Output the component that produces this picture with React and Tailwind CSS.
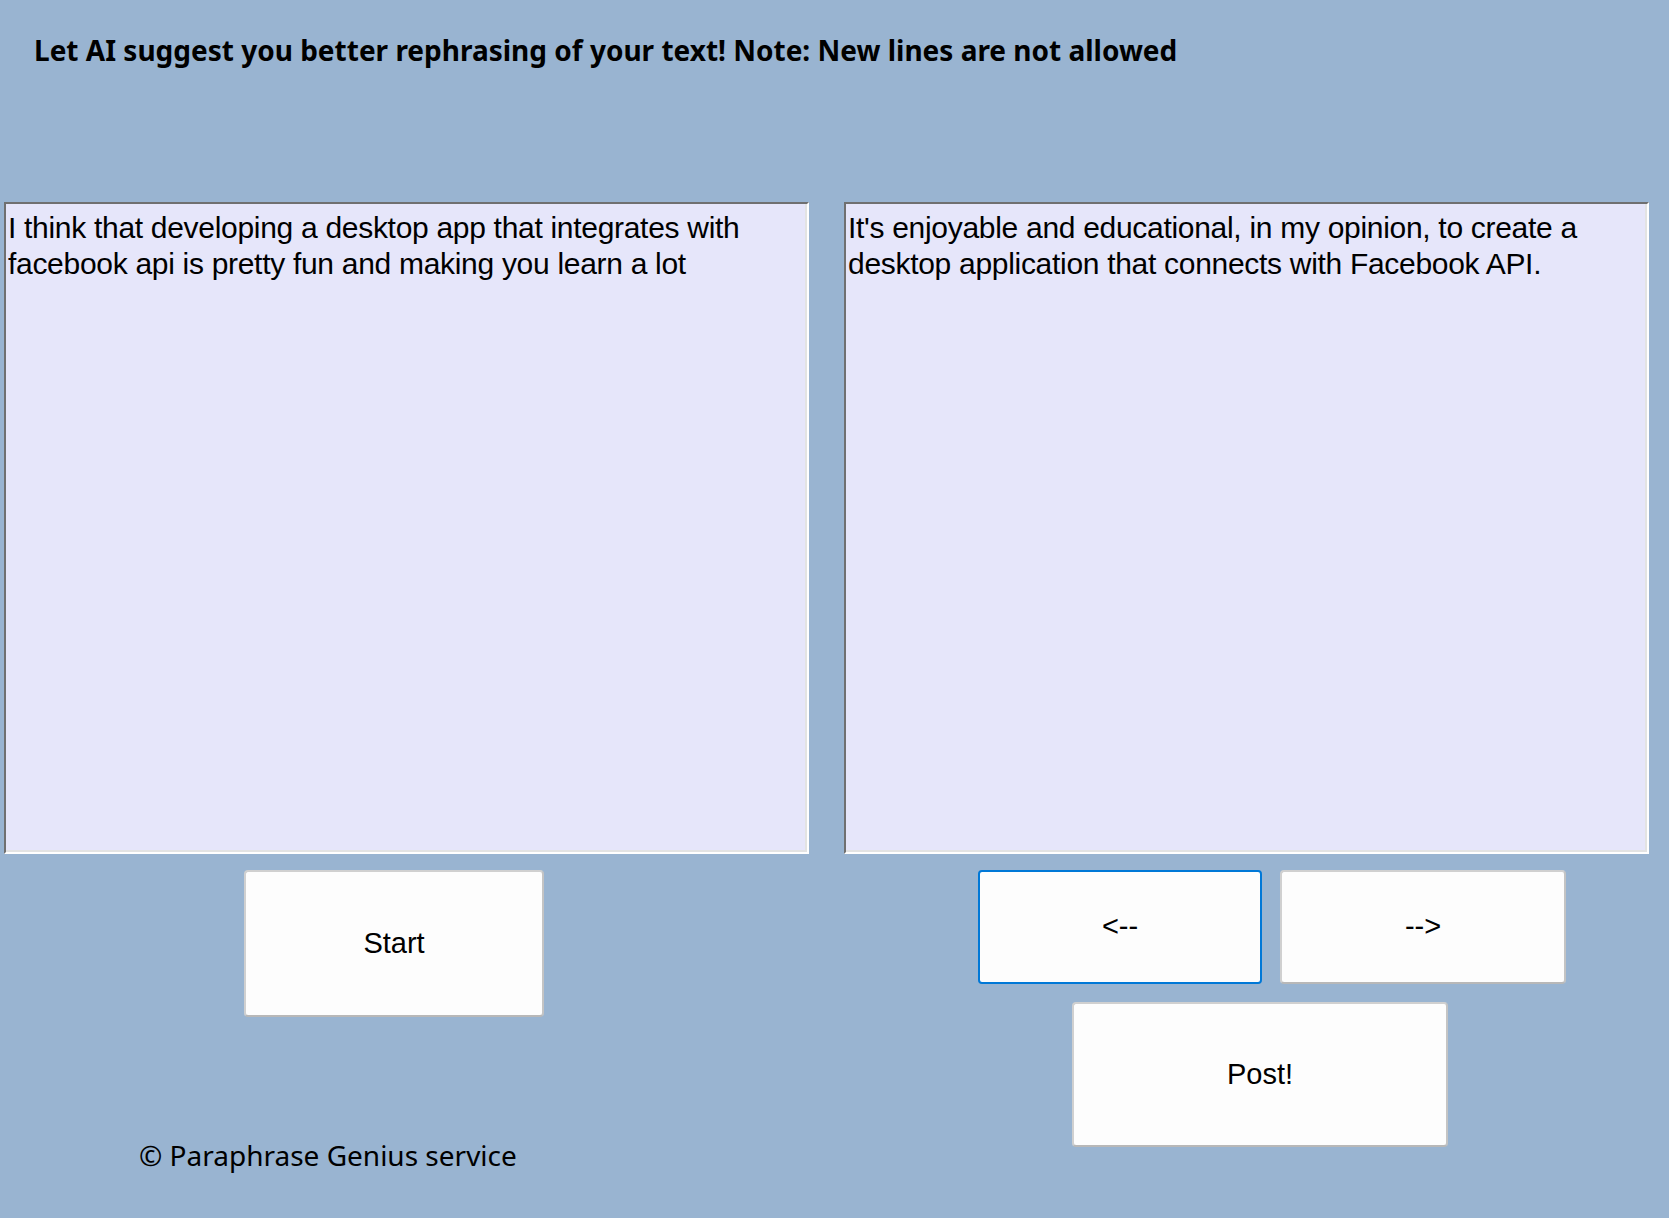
const leftText =
    "I think that developing a desktop app that integrates with facebook api is pretty fun and making you learn a lot";
const rightText =
    "It's enjoyable and educational, in my opinion, to create a desktop application that connects with Facebook API.";

const TextPanel = ({ text }) => (
    <div className="w-[805px] h-[652px] bg-[#e6e6fa] border-2 border-t-[#707070] border-l-[#707070] border-r-white border-b-white shadow-[inset_0_-2px_0_#e3e3e3,inset_-2px_0_0_#e3e3e3]">
        <p className="px-[2px] pt-[6px] text-[30px] leading-[36px] tracking-[-0.3px] text-black font-['Liberation_Sans',Arial,sans-serif]">
            {text}
        </p>
    </div>
);

const FormButton = ({ label, className, focused }) => (
    <button
        className={
            "flex items-center justify-center bg-[#fdfdfd] rounded-[4px] text-[29px] text-black font-['Liberation_Sans',Arial,sans-serif] " +
            (focused
                ? "border-2 border-[#0078d7]"
                : "border-2 border-[#d0d0d0] border-b-[#b8b8b8] border-r-[#c4c4c4]") +
            " " +
            className
        }
    >
        {label}
    </button>
);

const App = () => {
    return (
        <div className="w-[1669px] h-[1218px] overflow-hidden bg-[#99b4d1] font-['Noto_Sans',sans-serif]">
            <h1 className="pl-[34px] pt-[30px] text-[28px] leading-[40px] font-bold text-black">
                Let AI suggest you better rephrasing of your text! Note: New lines are not allowed
            </h1>

            <div className="flex gap-[35px] pl-[4px] mt-[132px]">
                <div className="flex flex-col">
                    <TextPanel text={leftText} />
                    <FormButton label="Start" className="mt-[16px] ml-[240px] w-[300px] h-[147px]" />
                    <span className="mt-[120px] ml-[135px] text-[28px] leading-[36px] text-black">
                        © Paraphrase Genius service
                    </span>
                </div>

                <div className="flex flex-col">
                    <TextPanel text={rightText} />
                    <div className="flex gap-[18px] mt-[16px] ml-[134px]">
                        <FormButton label="<--" focused className="w-[284px] h-[114px]" />
                        <FormButton label="-->" className="w-[286px] h-[114px]" />
                    </div>
                    <FormButton label="Post!" className="mt-[18px] ml-[228px] w-[376px] h-[145px]" />
                </div>
            </div>
        </div>
    );
};

export default App;
